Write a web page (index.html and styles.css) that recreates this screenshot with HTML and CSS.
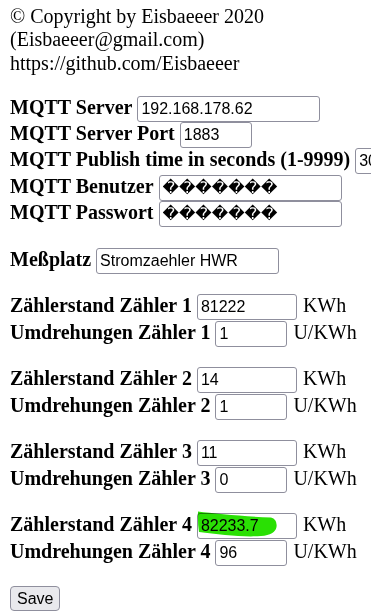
FILE: index.html
```html
<!DOCTYPE html>
<html lang="de">
<head>
<meta charset="utf-8">
<title>Stromzaehler</title>
<link rel="stylesheet" href="styles.css">
</head>
<body>
<div class="about">
  <div>© Copyright by Eisbaeeer 2020</div>
  <div>(Eisbaeeer@gmail.com)</div>
  <div>https://github.com/Eisbaeeer</div>
</div>
<form class="form">
  <div class="group">
    <div class="row"><label class="lbl">MQTT Server</label><input class="in in-l" value="192.168.178.62"></div>
    <div class="row"><label class="lbl">MQTT Server Port</label><input class="in in-s" value="1883"></div>
    <div class="row"><label class="lbl">MQTT Publish time in seconds (1-9999)</label><input class="in in-s" value="30"></div>
    <div class="row"><label class="lbl">MQTT Benutzer</label><input class="in in-l" value="&#xFFFD;&#xFFFD;&#xFFFD;&#xFFFD;&#xFFFD;&#xFFFD;&#xFFFD;"></div>
    <div class="row"><label class="lbl">MQTT Passwort</label><input class="in in-l" value="&#xFFFD;&#xFFFD;&#xFFFD;&#xFFFD;&#xFFFD;&#xFFFD;&#xFFFD;"></div>
  </div>
  <div class="group">
    <div class="row"><label class="lbl">Meßplatz</label><input class="in in-l" value="Stromzaehler HWR"></div>
  </div>
  <div class="group">
    <div class="row"><label class="lbl">Zählerstand Zähler 1</label><input class="in in-m" value="81222"><span class="unit">KWh</span></div>
    <div class="row"><label class="lbl">Umdrehungen Zähler 1</label><input class="in in-s" value="1"><span class="unit">U/KWh</span></div>
  </div>
  <div class="group">
    <div class="row"><label class="lbl">Zählerstand Zähler 2</label><input class="in in-m" value="14"><span class="unit">KWh</span></div>
    <div class="row"><label class="lbl">Umdrehungen Zähler 2</label><input class="in in-s" value="1"><span class="unit">U/KWh</span></div>
  </div>
  <div class="group">
    <div class="row"><label class="lbl">Zählerstand Zähler 3</label><input class="in in-m" value="11"><span class="unit">KWh</span></div>
    <div class="row"><label class="lbl">Umdrehungen Zähler 3</label><input class="in in-s" value="0"><span class="unit">U/KWh</span></div>
  </div>
  <div class="group">
    <div class="row"><label class="lbl">Zählerstand Zähler 4</label><span class="mark-wrap"><input class="in in-m" value="82233.7"><svg class="mark" viewBox="0 -3 84 30" width="84" height="30" aria-hidden="true"><path d="M1,-1.5 C17,0.5 47,3.5 74,4.5 Q80.5,6.5 79.5,14 Q78,22 64,23 C47,24.5 22,21.5 2,19 Q0.5,10 1,-1.5 Z" fill="#2ae004"/></svg></span><span class="unit">KWh</span></div>
    <div class="row"><label class="lbl">Umdrehungen Zähler 4</label><input class="in in-s" value="96"><span class="unit">U/KWh</span></div>
  </div>
  <div class="group">
    <button class="btn" type="button">Save</button>
  </div>
</form>
</body>
</html>
```
FILE: styles.css
```css
html {
  overflow: hidden;
}
body {
  margin: 0;
  padding: 5px 10px 0;
  font-family: "Liberation Serif", "Times New Roman", serif;
  font-size: 20px;
  color: #000;
  background: #fff;
}
.about {
  line-height: 23.3px;
}
.form {
  margin: 21px 0 0;
  display: flex;
  flex-direction: column;
  gap: 20.5px;
}
.group {
  display: flex;
  flex-direction: column;
}
.row {
  display: flex;
  align-items: baseline;
  gap: 5px;
  height: 26.25px;
  white-space: nowrap;
  line-height: 23px;
}
.lbl {
  font-weight: bold;
  flex: none;
}
.unit {
  flex: none;
  margin-left: 1px;
}
.in {
  flex: none;
  box-sizing: border-box;
  height: 26px;
  margin: 0;
  padding: 0 3px;
  border: 1px solid #8f8f9d;
  border-radius: 3px;
  background: #fff;
  color: #000;
  font-family: "Liberation Sans", Arial, "DejaVu Sans", sans-serif;
  font-size: 16px;
}
.in-l { width: 183px; }
.in-m { width: 100px; }
.in-s { width: 72px; }
.mark-wrap {
  position: relative;
  display: inline-block;
  flex: none;
}
.mark {
  position: absolute;
  left: 0;
  top: -3px;
  overflow: visible;
  mix-blend-mode: multiply;
  pointer-events: none;
}
.btn {
  align-self: flex-start;
  box-sizing: border-box;
  height: 25px;
  margin: 0;
  padding: 0 6px;
  border: 1px solid #8f8f9d;
  border-radius: 4px;
  background: #e9e9ed;
  color: #000;
  font-family: "Liberation Sans", Arial, sans-serif;
  font-size: 16px;
}
```
